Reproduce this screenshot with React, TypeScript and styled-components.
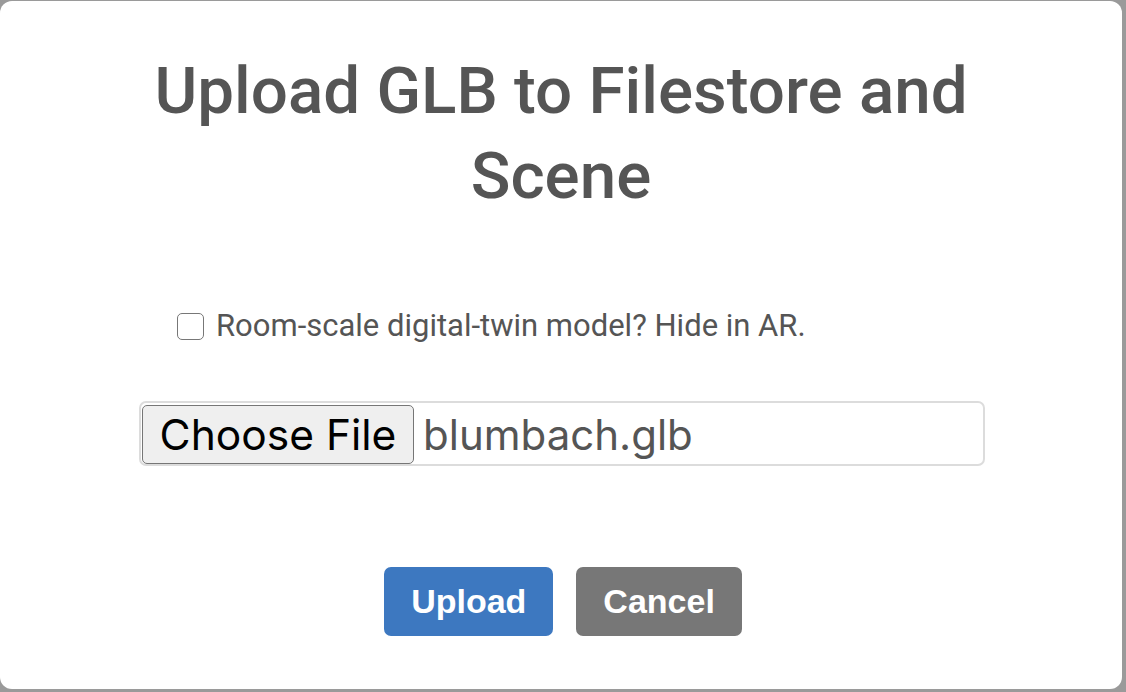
import styled, { createGlobalStyle } from "styled-components";

const GlobalStyle = createGlobalStyle`
  html, body {
    margin: 0;
    padding: 0;
    background: #9a9a9a;
    overflow: hidden;
  }
`;

const Backdrop = styled.div`
  width: 1126px;
  height: 692px;
  padding: 1px 4px 3px 0;
  box-sizing: border-box;
`;

const Modal = styled.div`
  height: 100%;
  background: #fff;
  border-radius: 12px;
  display: flex;
  flex-direction: column;
  align-items: center;
  font-family: Roboto, "Liberation Sans", sans-serif;
  color: #555;
`;

const Title = styled.h1`
  margin: 47px 0 0;
  width: 840px;
  text-align: center;
  font-size: 65.5px;
  font-weight: 500;
  line-height: 85px;
`;

const Form = styled.div`
  width: 846px;
  margin-top: 91px;
  margin-left: 2px;
`;

const CheckRow = styled.label`
  display: flex;
  align-items: center;
  gap: 12px;
  padding-left: 38px;
  font-size: 31px;
  line-height: 34px;
`;

const Box = styled.span`
  width: 25px;
  height: 25px;
  border: 1.5px solid #777;
  border-radius: 5px;
  background: #fff;
  flex: none;
`;

const FileField = styled.div`
  margin-top: 58px;
  height: 65px;
  border: 2px solid #dcdcdc;
  border-radius: 7px;
  box-sizing: border-box;
  display: flex;
  align-items: stretch;
  padding: 2px 0 0 1px;
  font-family: Inter, "Liberation Sans", sans-serif;
`;

const ChooseButton = styled.span`
  width: 272px;
  box-sizing: border-box;
  background: #efefef;
  border: 1.5px solid #767676;
  border-radius: 5px;
  display: flex;
  align-items: center;
  justify-content: center;
  font-size: 42.5px;
  color: #000;
`;

const FileName = styled.span`
  display: flex;
  align-items: center;
  padding-left: 9px;
  font-size: 42px;
  color: #555;
`;

const Actions = styled.div`
  margin: 101px 0 0 4px;
  display: flex;
  gap: 23px;
`;

const Button = styled.button<{ $tone: "primary" | "muted" }>`
  height: 69px;
  padding: 0 27px;
  border: none;
  border-radius: 7px;
  background: ${(p) => (p.$tone === "primary" ? "#3d78c0" : "#777777")};
  color: #fff;
  font-family: "Liberation Sans", Arial, sans-serif;
  font-weight: 700;
  font-size: 34px;
`;

export default function App() {
  return (
    <>
      <GlobalStyle />
      <Backdrop>
        <Modal>
          <Title>Upload GLB to Filestore and Scene</Title>
          <Form>
            <CheckRow>
              <Box />
              Room-scale digital-twin model? Hide in AR.
            </CheckRow>
            <FileField>
              <ChooseButton>Choose File</ChooseButton>
              <FileName>blumbach.glb</FileName>
            </FileField>
          </Form>
          <Actions>
            <Button $tone="primary">Upload</Button>
            <Button $tone="muted">Cancel</Button>
          </Actions>
        </Modal>
      </Backdrop>
    </>
  );
}
